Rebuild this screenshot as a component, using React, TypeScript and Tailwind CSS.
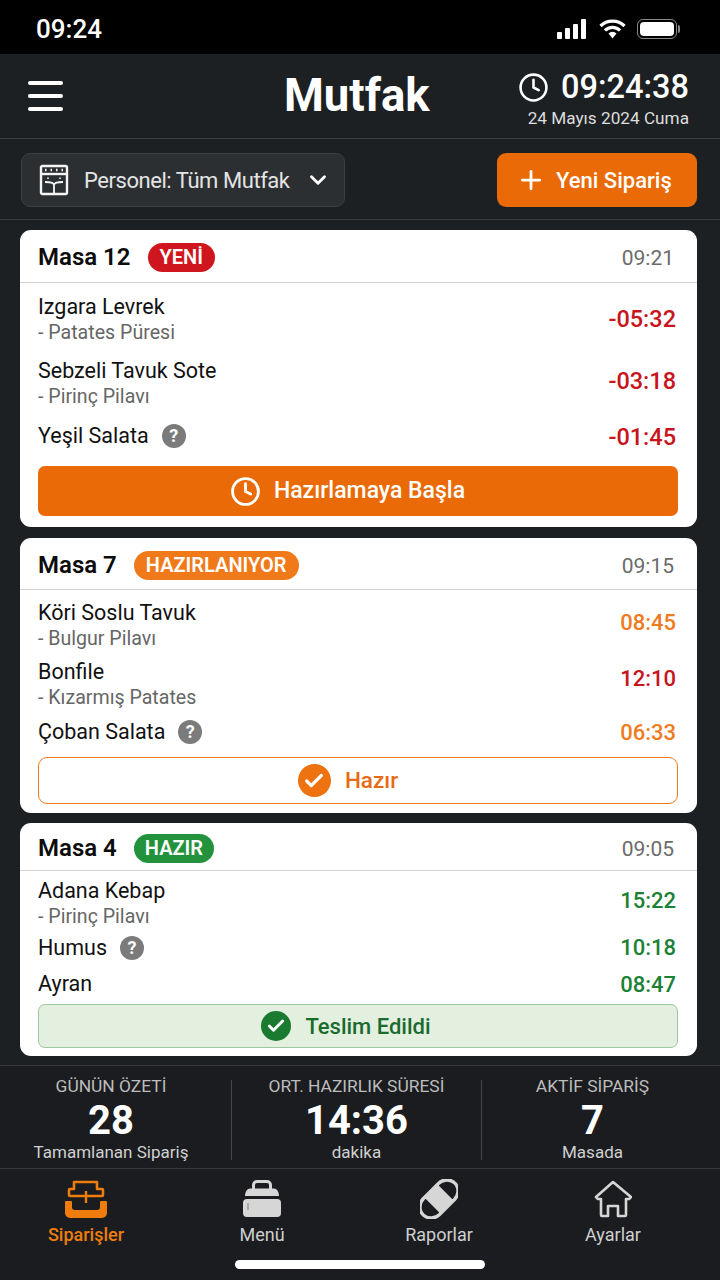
import { Check, ChevronDown, Clock, Plus } from "lucide-react";
import type { ReactNode } from "react";

const font = { fontFamily: "Roboto, 'Noto Sans', sans-serif" };

type Dish = {
  name: string;
  side?: string;
  time: string;
  color: string;
  note?: boolean;
  rowClass: string;
  timeClass: string;
};

const HelpDot = () => (
  <span className="ml-[13px] flex h-6 w-6 items-center justify-center rounded-full bg-[#7b7b7b] text-[18px] font-bold leading-none text-white">
    ?
  </span>
);

const DishRow = ({ dish }: { dish: Dish }) => (
  <div className={`flex items-start justify-between pt-[1px] ${dish.rowClass}`}>
    <div>
      <div className="flex items-center text-[21.5px] leading-[26px] text-[#111]">
        {dish.name}
        {dish.note && <HelpDot />}
      </div>
      {dish.side && <div className="mt-[1px] text-[19.6px] leading-[24px] text-[#666]">- {dish.side}</div>}
    </div>
    <div className={`mr-[2px] font-medium leading-[26px] ${dish.time.startsWith("-") ? "text-[23.5px]" : "text-[22px]"} ${dish.color} ${dish.timeClass}`}>
      {dish.time}
    </div>
  </div>
);

const OrderCard = ({
  table,
  badge,
  badgeClass,
  time,
  dishes,
  bodyClass,
  headerClass,
  className = "",
  children,
}: {
  table: string;
  badge: string;
  badgeClass: string;
  time: string;
  dishes: Dish[];
  bodyClass: string;
  headerClass: string;
  className?: string;
  children: ReactNode;
}) => (
  <section className={`overflow-hidden rounded-[11px] bg-white ${className}`}>
    <div className={`flex items-center justify-between border-b border-[#d5d5d5] pl-[18px] pr-[23px] ${headerClass}`}>
      <div className="flex items-center">
        <h2 className="text-[24px] font-semibold leading-none text-[#0c0c0c]">{table}</h2>
        <span className={`ml-[17px] flex h-[29px] items-center rounded-full text-[20px] font-semibold text-white ${badgeClass}`}>
          {badge}
        </span>
      </div>
      <span className="mt-[4px] text-[21px] text-[#6b6b6b]">{time}</span>
    </div>
    <div className={`pl-[18px] pr-[19px] ${bodyClass}`}>
      {dishes.map((dish) => (
        <DishRow key={dish.name} dish={dish} />
      ))}
      {children}
    </div>
  </section>
);

const OvenIcon = () => (
  <svg width="30" height="32" viewBox="0 0 30 32" fill="none" stroke="#f4f4f4" strokeWidth="2.4">
    <rect x="2" y="2" width="26" height="28" rx="1.5" />
    <path d="M2 10h26" />
    <path d="M6 6h1.5M11.5 6h1.5M17 6h1.5M22.5 6h1.5" />
    <path d="M15 30V21c0-2-4-3-9-3M15 21c0-2 4-3 9-3" strokeWidth="1.8" />
    <path d="M9 13.5v1.5M21 13.5v1.5" strokeWidth="1.6" />
  </svg>
);

const TabTray = () => (
  <svg width="44" height="40" viewBox="0 0 44 40" fill="none">
    <path
      d="M10 3h23v7h5a1 1 0 0 1 1 1v5a1 1 0 0 1-1 1H6a1 1 0 0 1-1-1v-5a1 1 0 0 1 1-1h4z"
      stroke="#ee7d0e"
      strokeWidth="2.6"
      strokeLinejoin="round"
    />
    <path d="M22 12v12" stroke="#ee7d0e" strokeWidth="2.4" />
    <path
      d="M2 22h5a1 1 0 0 1 1 1v5a3 3 0 0 0 3 3h22a3 3 0 0 0 3-3v-5a1 1 0 0 1 1-1h5a1 1 0 0 1 1 1v11a5 5 0 0 1-5 5H6a5 5 0 0 1-5-5V23a1 1 0 0 1 1-1z"
      fill="#ee7d0e"
    />
  </svg>
);

const TabBag = () => (
  <svg width="38" height="38" viewBox="0 0 38 38">
    <path d="M10.5 9V5A3.5 3.5 0 0 1 14 1.5h10A3.5 3.5 0 0 1 27.5 5v4" fill="none" stroke="#d6d6d6" strokeWidth="3" />
    <path d="M7 8.500h24c2.500 0 5 3 5 7.500H2c0-4.500 2.500-7.500 5-7.500z" fill="#d6d6d6" />
    <rect x="0" y="19" width="38" height="18" rx="4" fill="#d6d6d6" />
    <path d="M5 23v7" stroke="#9a9a9a" strokeWidth="1.5" />
  </svg>
);

const TabBandage = () => (
  <svg width="38" height="40" viewBox="0 0 38 40">
    <g transform="rotate(45 19 20)">
      <rect x="6" y="-4" width="26" height="48" rx="13" fill="#d6d6d6" />
      <path d="M10 10a9 10 0 0 1 18 0z" fill="#1a1c1f" stroke="#1a1c1f" strokeWidth="1.5" strokeLinejoin="round" />
      <path d="M10 30a9 10 0 0 0 18 0z" fill="#1a1c1f" stroke="#1a1c1f" strokeWidth="1.5" strokeLinejoin="round" />
    </g>
  </svg>
);

const TabHouse = () => (
  <svg width="38" height="38" viewBox="0 0 38 38" fill="none" stroke="#d6d6d6" strokeWidth="2.6" strokeLinejoin="round">
    <path d="M19 2 37 17l-2 2h-3v16a1 1 0 0 1-1 1h-7V26H14v10H8a1 1 0 0 1-1-1V19H4l-2-2z" />
  </svg>
);

const Tab = ({ icon, label, active, className }: { icon: ReactNode; label: string; active?: boolean; className: string }) => (
  <div className={`flex w-[130px] flex-col items-center ${className}`}>
    <div className="flex h-[40px] items-center">{icon}</div>
    <span className={`mt-[4px] text-[18px] leading-[24px] ${active ? "font-medium text-[#ee7d0e]" : "text-[#cfcfcf]"}`}>{label}</span>
  </div>
);

const Stat = ({ title, value, sub, className }: { title: string; value: string; sub: string; className: string }) => (
  <div className={`flex flex-col items-center pt-[10px] ${className}`}>
    <span className="text-[17.4px] leading-[20px] text-[#bdbdbd]">{title}</span>
    <span className="mt-[3px] text-[40px] font-bold leading-[44px] text-white">{value}</span>
    <span className="mt-[-1px] text-[17px] leading-[20px] text-[#d0d0d0]">{sub}</span>
  </div>
);

const StatDivider = () => <div className="mt-[14px] h-[80px] w-px shrink-0 bg-[#44474a]" />;

export default function App() {
  return (
    <div style={font} className="flex h-[1280px] w-[720px] flex-col overflow-hidden bg-[#1d2023]">
      <div className="flex h-[54px] shrink-0 items-center justify-between bg-black pl-9 pr-[40px] pt-[4px]">
        <span className="text-[26px] font-medium text-white">09:24</span>
        <div className="flex items-center gap-[11px]">
          <svg width="31" height="20" viewBox="0 0 31 20" fill="white">
            <rect x="0" y="13" width="5" height="7" rx="1" />
            <rect x="8" y="9" width="5" height="11" rx="1" />
            <rect x="16" y="5" width="5" height="15" rx="1" />
            <rect x="24" y="0" width="5" height="20" rx="1" />
          </svg>
          <svg width="27" height="20" viewBox="0 0 27 20" fill="none" stroke="white" strokeWidth="3.2">
            <path d="M1.5 7a17 17 0 0 1 24 0M6 11.5a10.5 10.5 0 0 1 15 0" />
            <path d="M9.5 14.5 13.5 19.5l4-5a5.5 5.5 0 0 0-8 0z" fill="white" stroke="none" />
          </svg>
          <div className="flex items-center">
            <div className="h-[20px] w-[40px] rounded-[6px] border border-[#8a8a8a] p-[2px]">
              <div className="h-full w-full rounded-[4px] bg-white" />
            </div>
            <div className="ml-[1px] h-[8px] w-[2px] rounded-r-sm bg-[#8a8a8a]" />
          </div>
        </div>
      </div>

      <header className="flex h-[85px] shrink-0 items-center border-b border-[#3a3d40] pl-7 pr-[31px]">
        <div className="flex w-[35px] flex-col gap-[9px]">
          <div className="h-1 rounded-full bg-white" />
          <div className="h-1 rounded-full bg-white" />
          <div className="h-1 rounded-full bg-white" />
        </div>
        <h1 className="ml-[221px] text-[45.5px] font-bold leading-[58px] text-white">Mutfak</h1>
        <div className="ml-auto flex flex-col items-end pt-[4px]">
          <div className="flex items-center gap-[12px]">
            <Clock size={31} color="white" strokeWidth={2} />
            <span className="text-[32.5px] font-medium leading-[40px] text-white">09:24:38</span>
          </div>
          <span className="text-[17.2px] leading-[22px] text-[#ddd]">24 Mayıs 2024 Cuma</span>
        </div>
      </header>

      <div className="flex h-[81px] shrink-0 items-center justify-between border-b border-[#3a3d40] pl-[21px] pr-[23px] pt-[2px]">
        <div className="flex h-[54px] w-[324px] items-center rounded-[9px] border border-[#3d4043] bg-[#2c2f32] pl-[17px]">
          <OvenIcon />
          <span className="ml-[15px] text-[22px] tracking-[-0.45px] text-[#e4e4e4]">Personel: Tüm Mutfak</span>
          <ChevronDown size={26} color="white" strokeWidth={2.6} className="ml-[15px]" />
        </div>
        <div className="flex h-[54px] w-[200px] items-center rounded-[9px] bg-[#e96a06] pl-[19px]">
          <Plus size={30} color="white" strokeWidth={2.2} />
          <span className="ml-[10px] text-[22px] font-medium text-white">Yeni Sipariş</span>
        </div>
      </div>

      <main className="flex flex-col gap-[10px] pl-[20px] pr-[23px] pt-[10px]">
        <OrderCard
          table="Masa 12"
          badge="YENİ"
          badgeClass="bg-[#cf161e] px-[12px]"
          time="09:21"
          headerClass="h-[53px] pt-[2px]"
          bodyClass="pt-[10px] pb-[11px]"
          dishes={[
            { name: "Izgara Levrek", side: "Patates Püresi", time: "-05:32", color: "text-[#c8141c]", rowClass: "h-[64px]", timeClass: "mt-[12px]" },
            { name: "Sebzeli Tavuk Sote", side: "Pirinç Pilavı", time: "-03:18", color: "text-[#c8141c]", rowClass: "h-[65px]", timeClass: "mt-[10px]" },
            { name: "Yeşil Salata", time: "-01:45", color: "text-[#c8141c]", note: true, rowClass: "h-[44px]", timeClass: "mt-[1px]" },
          ]}
        >
          <button className="flex h-[50px] w-full items-center justify-center rounded-[7px] bg-[#e96a06] pr-[21px] text-[23px] font-medium text-white">
            <Clock size={31} strokeWidth={2.2} className="mr-[13px]" />
            Hazırlamaya Başla
          </button>
        </OrderCard>

        <OrderCard
          className="mt-[1px]"
          table="Masa 7"
          badge="HAZIRLANIYOR"
          badgeClass="bg-[#f0791a] px-[12px]"
          time="09:15"
          headerClass="h-[52px] pt-[3px]"
          bodyClass="pt-[9px] pb-[9px]"
          dishes={[
            { name: "Köri Soslu Tavuk", side: "Bulgur Pilavı", time: "08:45", color: "text-[#ef7b1c]", rowClass: "h-[59px]", timeClass: "mt-[10px]" },
            { name: "Bonfile", side: "Kızarmış Patates", time: "12:10", color: "text-[#c8141c]", rowClass: "h-[60px]", timeClass: "mt-[7px]" },
            { name: "Çoban Salata", time: "06:33", color: "text-[#ef7b1c]", note: true, rowClass: "h-[39px]", timeClass: "mt-[1px]" },
          ]}
        >
          <button className="flex h-[47px] w-full items-center justify-center rounded-[9px] border border-[#ee7b1f] bg-white pr-[20px] text-[22.5px] font-medium text-[#e96a12]">
            <span className="mr-[14px] flex h-[33px] w-[33px] items-center justify-center rounded-full bg-[#ee720f]">
              <Check size={22} color="white" strokeWidth={3.5} />
            </span>
            Hazır
          </button>
        </OrderCard>

        <OrderCard
          table="Masa 4"
          badge="HAZIR"
          badgeClass="bg-[#22923c] px-[11px]"
          time="09:05"
          headerClass="h-[48px] pt-[3px]"
          bodyClass="pt-[6px] pb-[8px]"
          dishes={[
            { name: "Adana Kebap", side: "Pirinç Pilavı", time: "15:22", color: "text-[#1c8135]", rowClass: "h-[57px]", timeClass: "mt-[10px]" },
            { name: "Humus", time: "10:18", color: "text-[#1c8135]", note: true, rowClass: "h-[36px]", timeClass: "mt-0" },
            { name: "Ayran", time: "08:47", color: "text-[#1c8135]", rowClass: "h-[34px]", timeClass: "mt-[1px]" },
          ]}
        >
          <button className="flex h-[44px] w-full items-center justify-center rounded-[7px] border border-[#9cc79f] bg-[#e3efdf] pr-[24px] text-[22px] font-medium text-[#1a6b2d]">
            <span className="mr-[14px] flex h-[30px] w-[30px] items-center justify-center rounded-full bg-[#1a7a30]">
              <Check size={20} color="white" strokeWidth={3.5} />
            </span>
            Teslim Edildi
          </button>
        </OrderCard>
      </main>

      <div className="mt-[9px] flex h-[104px] shrink-0 border-y border-[#35383b] bg-[#1a1c1f]">
        <Stat title="GÜNÜN ÖZETİ" value="28" sub="Tamamlanan Sipariş" className="w-[231px] pr-[9px]" />
        <StatDivider />
        <Stat title="ORT. HAZIRLIK SÜRESİ" value="14:36" sub="dakika" className="w-[249px]" />
        <StatDivider />
        <Stat title="AKTİF SİPARİŞ" value="7" sub="Masada" className="w-[221px]" />
      </div>

      <nav className="flex-1 bg-[#1a1c1f] pt-[10px]">
        <div className="flex">
          <Tab icon={<TabTray />} label="Siparişler" active className="ml-[21px]" />
          <Tab icon={<TabBag />} label="Menü" className="ml-[46px]" />
          <Tab icon={<TabBandage />} label="Raporlar" className="ml-[47px]" />
          <Tab icon={<TabHouse />} label="Ayarlar" className="ml-[44px]" />
        </div>
        <div className="mx-auto mt-[13px] h-[9px] w-[250px] rounded-full bg-white" />
      </nav>
    </div>
  );
}
